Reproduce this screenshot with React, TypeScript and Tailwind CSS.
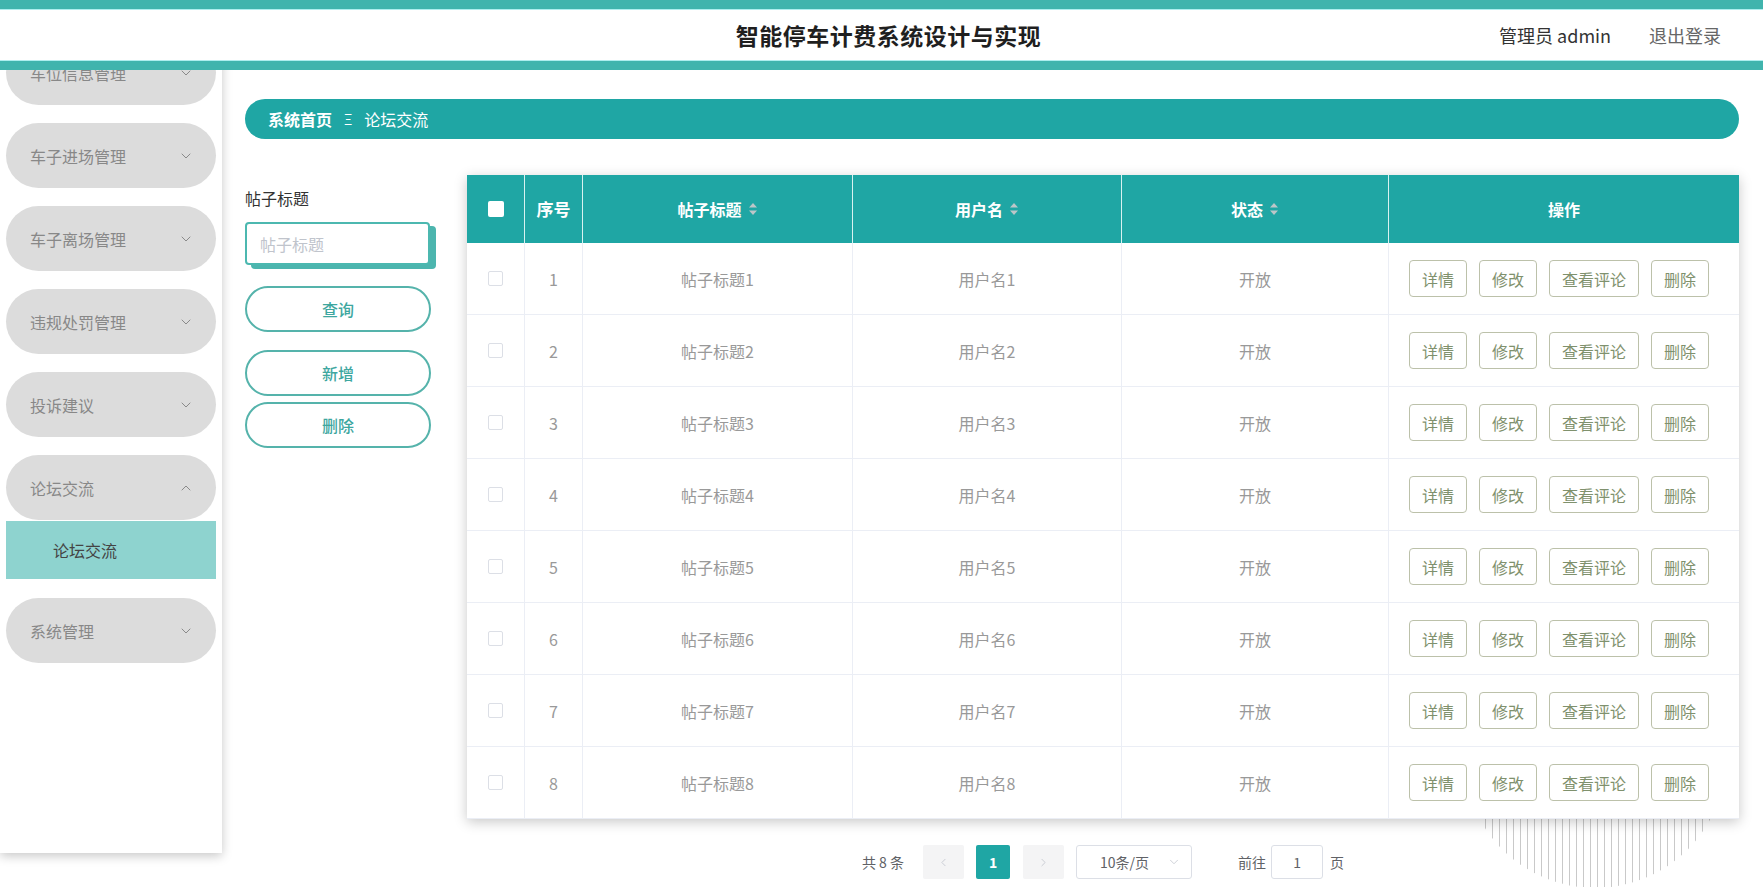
import React from 'react';
import { ChevronDown, ChevronUp, ChevronLeft, ChevronRight } from 'lucide-react';

const MENUS = ['车位信息管理', '车子进场管理', '车子离场管理', '违规处罚管理', '投诉建议'];
const ROWS = [1, 2, 3, 4, 5, 6, 7, 8];
const ACTIONS = ['详情', '修改', '查看评论', '删除'];

const SortCaret: React.FC = () => (
  <svg width="10" height="14" viewBox="0 0 10 14" className="ml-[6px]">
    <path d="M5 1 L9 5.5 H1 Z" fill="#bcc6c8" />
    <path d="M5 13 L9 8.5 H1 Z" fill="#bcc6c8" />
  </svg>
);

const App: React.FC = () => {
  return (
    <div className="relative w-[1763px] h-[887px] overflow-hidden bg-white font-['Noto_Sans_CJK_SC','Noto_Sans',sans-serif]">
      {/* Header */}
      <header className="absolute top-0 left-0 right-0 z-20 h-[70px] flex flex-col">
        <div className="h-[10px] bg-[#40b4ad] border-b border-[#aeeeee]" />
        <div className="relative flex-1 bg-white flex items-center justify-center">
          <h1 className="pl-[14px] text-[23px] font-semibold text-[#1f1f1f] tracking-[0.5px]">智能停车计费系统设计与实现</h1>
          <div className="absolute right-[42px] top-0 bottom-0 flex items-center gap-[38px] text-[18px]">
            <span className="text-[#333]">管理员 admin</span>
            <span className="text-[#666]">退出登录</span>
          </div>
        </div>
        <div className="h-[10px] bg-[#40b4ad] border-t border-[#aeeeee]" />
      </header>

      {/* Decorative stripes */}
      <div className="absolute left-[1464px] top-[626px] w-[262px] h-[262px] rounded-full bg-[repeating-linear-gradient(90deg,#c9c9c9_0px,#c9c9c9_1px,transparent_1px,transparent_7px)]" />

      <div className="flex">
        {/* Sidebar */}
        <aside className="relative z-10 w-[222px] h-[853px] shrink-0 bg-white shadow-[0_3px_10px_rgba(0,0,0,0.22)] pt-[40px] px-[6px]">
          {MENUS.map((m) => (
            <div key={m} className="h-[65px] mb-[18px] rounded-full bg-[#dcdcdc] flex items-center justify-between pl-[24px] pr-[22px] text-[16px] text-[#888]">
              <span>{m}</span>
              <ChevronDown size={16} strokeWidth={1.5} className="text-[#8a8a8a]" />
            </div>
          ))}
          <div className="h-[65px] mb-[1px] rounded-full bg-[#dcdcdc] flex items-center justify-between pl-[24px] pr-[22px] text-[16px] text-[#888]">
            <span>论坛交流</span>
            <ChevronUp size={16} strokeWidth={1.5} className="text-[#8a8a8a]" />
          </div>
          <div className="h-[58px] mb-[19px] bg-[#8ed3cf] flex items-center pl-[47px] text-[16px] text-[#444]">论坛交流</div>
          <div className="h-[65px] rounded-full bg-[#dcdcdc] flex items-center justify-between pl-[24px] pr-[22px] text-[16px] text-[#888]">
            <span>系统管理</span>
            <ChevronDown size={16} strokeWidth={1.5} className="text-[#8a8a8a]" />
          </div>
        </aside>

        {/* Main */}
        <main className="flex-1 pl-[23px] pr-[24px] pt-[99px]">
          <div className="h-[40px] rounded-full bg-[#1fa6a4] flex items-center pl-[23px] text-white text-[16px]">
            <span className="font-bold">系统首页</span>
            <span className="mx-[12px] text-[14px]">Ξ</span>
            <span>论坛交流</span>
          </div>

          <div className="flex mt-[36px]">
            {/* Search form */}
            <div className="w-[192px] shrink-0 pt-[11px]">
              <div className="h-[24px] leading-[24px] text-[16px] text-[#333]">帖子标题</div>
              <div className="mt-[12px] w-[185px] h-[43px] rounded-[4px] border-2 border-[#4cb8b0] bg-white shadow-[6px_4px_0_#4cb5ae] flex items-center pl-[13px] text-[16px] text-[#c0c4cc]">
                帖子标题
              </div>
              <button className="mt-[21px] w-[186px] h-[46px] rounded-full border-2 border-[#55b3ab] bg-white text-[16px] font-medium text-[#3ea79f]">查询</button>
              <button className="mt-[18px] w-[186px] h-[46px] rounded-full border-2 border-[#55b3ab] bg-white text-[16px] font-medium text-[#3ea79f]">新增</button>
              <button className="mt-[6px] w-[186px] h-[46px] rounded-full border-2 border-[#55b3ab] bg-white text-[16px] font-medium text-[#3ea79f]">删除</button>
            </div>

            {/* Table + pagination */}
            <div className="ml-[30px] flex-1 flex flex-col items-center">
              <div className="relative z-10 w-[1272px] bg-white shadow-[0_3px_12px_rgba(0,0,0,0.22)]">
                <div className="grid grid-cols-[58px_58px_270px_269px_267px_350px] h-[68px] bg-[#1fa6a4] text-white text-[16px] font-bold">
                  <div className="flex items-center justify-center border-r border-[#d8f2f1]">
                    <span className="w-[16px] h-[16px] rounded-[2px] bg-white" />
                  </div>
                  <div className="flex items-center justify-center border-r border-[#d8f2f1] text-[17px]">序号</div>
                  <div className="flex items-center justify-center border-r border-[#d8f2f1]">帖子标题<SortCaret /></div>
                  <div className="flex items-center justify-center border-r border-[#d8f2f1]">用户名<SortCaret /></div>
                  <div className="flex items-center justify-center border-r border-[#d8f2f1]">状态<SortCaret /></div>
                  <div className="flex items-center justify-center">操作</div>
                </div>
                {ROWS.map((n) => (
                  <div key={n} className="grid grid-cols-[58px_58px_270px_269px_267px_350px] h-[72px] border-b border-[#ebeef5] text-[16px] text-[#999]">
                    <div className="flex items-center justify-center border-r border-[#ebeef5]">
                      <span className="w-[15px] h-[15px] rounded-[2px] border border-[#dcdfe6] bg-white" />
                    </div>
                    <div className="flex items-center justify-center border-r border-[#ebeef5]">{n}</div>
                    <div className="flex items-center justify-center border-r border-[#ebeef5]">帖子标题{n}</div>
                    <div className="flex items-center justify-center border-r border-[#ebeef5]">用户名{n}</div>
                    <div className="flex items-center justify-center border-r border-[#ebeef5]">开放</div>
                    <div className="flex items-center pl-[20px] gap-[12px]">
                      {ACTIONS.map((a) => (
                        <button key={a} className="h-[37px] px-[12px] rounded-[4px] border border-[#bcc1aa] bg-white text-[16px] text-[#7f916d]">
                          {a}
                        </button>
                      ))}
                    </div>
                  </div>
                ))}
              </div>

              {/* Pagination */}
              <div className="mt-[26px] flex items-center text-[14px] text-[#606266]">
                <span>共 8 条</span>
                <span className="ml-[19px] w-[41px] h-[34px] rounded-[2px] bg-[#f4f4f5] flex items-center justify-center text-[#c0c4cc]">
                  <ChevronLeft size={13} strokeWidth={1.5} />
                </span>
                <span className="ml-[12px] w-[34px] h-[34px] rounded-[2px] bg-[#1fa6a4] flex items-center justify-center text-white font-bold">1</span>
                <span className="ml-[13px] w-[41px] h-[34px] rounded-[2px] bg-[#f4f4f5] flex items-center justify-center text-[#c0c4cc]">
                  <ChevronRight size={13} strokeWidth={1.5} />
                </span>
                <span className="ml-[12px] w-[116px] h-[34px] rounded-[3px] border border-[#dcdfe6] flex items-center justify-between pl-[23px] pr-[10px]">
                  <span>10条/页</span>
                  <ChevronDown size={14} strokeWidth={1.3} className="text-[#c0c4cc]" />
                </span>
                <span className="ml-[46px]">前往</span>
                <span className="ml-[5px] w-[52px] h-[34px] rounded-[3px] border border-[#dcdfe6] flex items-center justify-center">1</span>
                <span className="ml-[7px]">页</span>
              </div>
            </div>
          </div>
        </main>
      </div>
    </div>
  );
};

export default App;
